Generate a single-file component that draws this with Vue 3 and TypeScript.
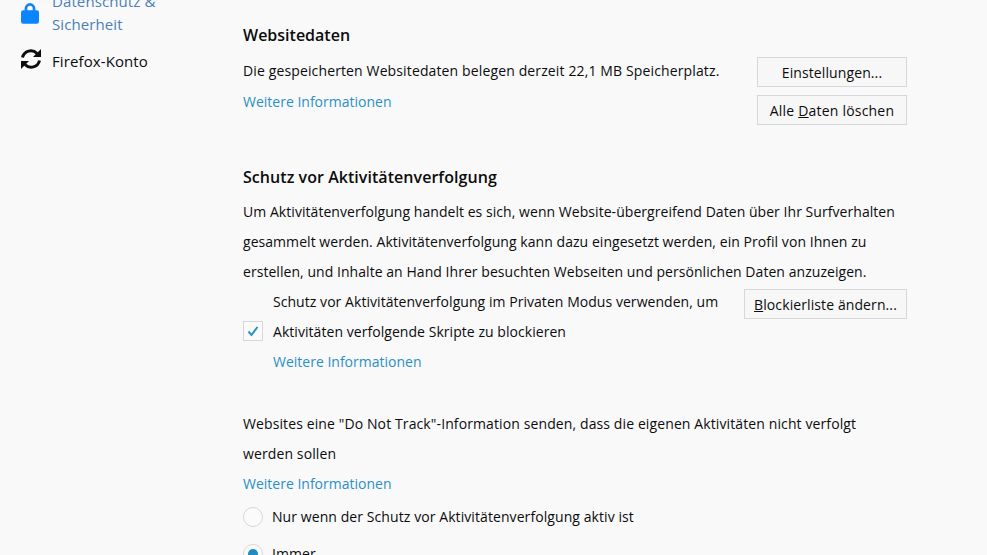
<script setup lang="ts">
const info = 'Weitere Informationen'
</script>

<template>
  <div class="page">
    <nav class="side">
      <a class="cat active">
        <svg class="ico lock" viewBox="0 0 20 24" width="18" height="22"><path fill="#0a84ff" d="M4 9V7a6 6 0 0 1 12 0v2h1.500A2.500 2.500 0 0 1 20 11.500V21.500A2.500 2.500 0 0 1 17.500 24h-15A2.500 2.500 0 0 1 0 21.500V11.500A2.500 2.500 0 0 1 2.500 9zM7 9h6V7a3 3 0 0 0-6 0z"/></svg>
        <span>Datenschutz &amp; Sicherheit</span>
      </a>
      <a class="cat account">
        <svg class="ico sync" viewBox="0 0 22 22" width="22" height="22"><g fill="none" stroke="#0c0c0d" stroke-width="3"><path d="M2.500 9.500A8.500 8.500 0 0 1 17 5.500"/><path d="M19.500 12.500A8.500 8.500 0 0 1 5 16.500"/></g><path fill="#0c0c0d" d="M21 1v8h-8zM1 21v-8h8z"/></svg>
        <span>Firefox-Konto</span>
      </a>
    </nav>
    <main class="main">
      <section class="group">
        <h2>Websitedaten</h2>
        <div class="split">
          <div class="col stack">
            <p class="usage">Die gespeicherten Websitedaten belegen derzeit 22,1 MB Speicherplatz.</p>
            <a class="link">{{ info }}</a>
          </div>
          <div class="btns">
            <button>Einstellun<u>g</u>en...</button>
            <button class="wide">Alle <u>D</u>aten löschen</button>
          </div>
        </div>
      </section>
      <section class="group second">
        <h2 class="long">Schutz vor Aktivitätenverfolgung</h2>
        <p>Um Aktivitätenverfolgung handelt es sich, wenn Website-übergreifend Daten über Ihr Surfverhalten gesammelt werden. Aktivitätenverfolgung kann dazu eingesetzt werden, ein Profil von Ihnen zu erstellen, und Inhalte an Hand Ihrer besuchten Webseiten und persönlichen Daten anzuzeigen.</p>
        <div class="split">
          <div class="check">
            <span class="box"><svg viewBox="0 0 12 12" width="12" height="12"><path d="M1.500 6.500 4.500 10 10.500 2" fill="none" stroke="#2a90c4" stroke-width="2"/></svg></span>
            <div class="col narrow">
              <span>Schutz vor Aktivitätenverfolgung im Privaten Modus verwenden, um Aktivitäten verfolgende Skripte zu blockieren</span>
              <a class="link">{{ info }}</a>
            </div>
          </div>
          <button class="block"><u>B</u>lockierliste ändern...</button>
        </div>
        <p class="dnt">Websites eine "Do Not Track"-Information senden, dass die eigenen Aktivitäten nicht verfolgt werden sollen</p>
        <a class="link">{{ info }}</a>
        <div class="radios">
          <label class="radio"><span class="dot"></span><span class="label">Nur wenn der Schutz vor Aktivitätenverfolgung aktiv ist</span></label>
          <label class="radio"><span class="dot on"></span><span class="label">Immer</span></label>
        </div>
      </section>
    </main>
  </div>
</template>

<style scoped>
.page {
  display: flex;
  height: 555px;
  overflow: hidden;
  background: #f9f9fa;
  color: #0c0c0d;
  font-family: "Open Sans", sans-serif;
  font-size: 14px;
  letter-spacing: 0.05px;
}
.side {
  width: 243px;
  flex: none;
  box-sizing: border-box;
  padding: 0 60px 0 20px;
  margin-top: -10px;
}
.cat {
  display: flex;
  gap: 12px;
  font-size: 15px;
  line-height: 23px;
  margin-bottom: 14px;
  letter-spacing: 0.1px;
}
.account { gap: 10px; }
.active { color: #4a80b5; }
.ico { flex: none; }
.lock { margin: 12px 1px 0; }
.sync { margin-top: -2px; }
.main { width: 664px; padding-top: 20px; }
h2 {
  margin: 0;
  font-size: 16px;
  font-weight: 600;
  line-height: 30px;
  letter-spacing: 0;
}
h2.long { letter-spacing: 0.05px; margin-bottom: 5px; }
p { margin: 0; line-height: 30px; }
.usage { letter-spacing: 0.13px; }
.group > h2:not(.long) { margin-bottom: 6px; }
.split { display: flex; justify-content: space-between; }
.col { display: flex; flex-direction: column; line-height: 30px; }
.stack { gap: 1px; }
.link { color: #2a90c4; line-height: 30px; letter-spacing: 0; }
.btns { display: flex; flex-direction: column; gap: 8px; margin-top: 1px; }
button {
  width: 150px;
  height: 30px;
  padding: 0;
  box-sizing: border-box;
  background: #f7f7f8;
  border: 1px solid #d7d7db;
  color: #0c0c0d;
  font: inherit;
  letter-spacing: 0.1px;
}
button.wide { letter-spacing: 0.2px; }
.second { margin-top: 37px; }
.check { display: flex; gap: 10px; align-items: center; }
.box {
  width: 20px;
  height: 20px;
  box-sizing: border-box;
  border: 1px solid #d7d7db;
  background: #fafafb;
  display: flex;
  align-items: center;
  justify-content: center;
  margin-top: -2px;
}
.narrow { width: 460px; }
.block { width: 163px; margin-top: 2px; }
.dnt { margin-top: 32px; width: 640px; letter-spacing: 0.11px; }
.radios { display: flex; flex-direction: column; gap: 3px; margin-top: 1px; }
.radio { display: flex; align-items: center; gap: 9px; height: 34px; letter-spacing: 0.08px; }
.label { margin-top: -2px; }
.dot {
  width: 20px;
  height: 20px;
  box-sizing: border-box;
  border: 1px solid #d7d7db;
  border-radius: 50%;
  background: #fbfbfc;
  position: relative;
}
.dot.on::after {
  content: "";
  position: absolute;
  inset: 4px;
  border-radius: 50%;
  background: #1f8ac4;
}
</style>
